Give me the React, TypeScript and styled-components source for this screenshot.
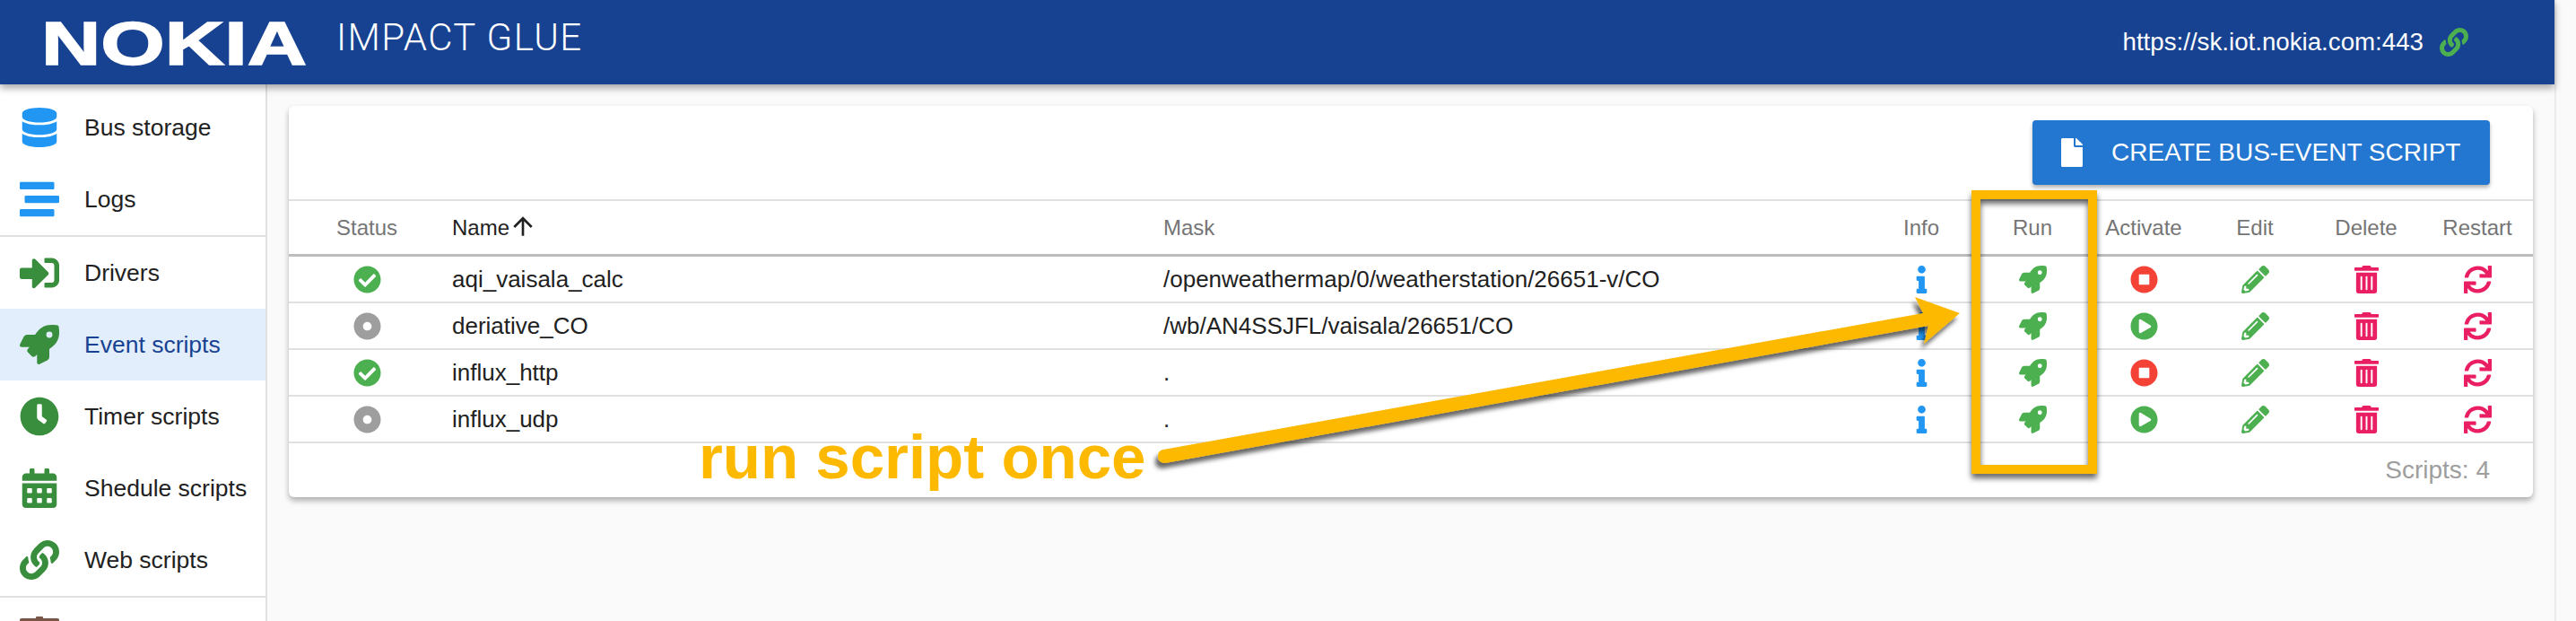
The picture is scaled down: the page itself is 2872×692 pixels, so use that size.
import React from 'react'
import styled, { createGlobalStyle } from 'styled-components'
import {
  FaDatabase, FaStream, FaSignInAlt, FaRocket, FaClock, FaCalendarAlt, FaLink,
  FaInfo, FaPlayCircle, FaStopCircle, FaPencilAlt, FaTrashAlt, FaSync, FaCheckCircle, FaDotCircle, FaFile,
} from 'react-icons/fa'
import { MdArrowUpward } from 'react-icons/md'

const GlobalStyle = createGlobalStyle`
  html, body {
    margin: 0;
    height: 692px;
    overflow: hidden;
    background: #fafafa;
    font-family: "Liberation Sans", Arial, sans-serif;
  }
`

const Page = styled.div`
  position: relative;
  display: flex;
  width: 2872px;
  height: 692px;
  overflow: hidden;
`

const Main = styled.div`
  width: 2848px;
  display: flex;
  flex-direction: column;
`

const ScrollTrack = styled.div`
  width: 22px;
  border-left: 2px solid #ebebeb;
  background: #fafafa;
`

const Header = styled.header`
  position: relative;
  z-index: 2;
  height: 94px;
  flex: none;
  display: flex;
  align-items: center;
  padding: 0 96px 0 46px;
  background: #174291;
  color: #fff;
  box-shadow: 0 4px 8px rgba(0, 0, 0, 0.35);
`

const Logo = styled.svg`
  width: 296px;
  height: 80px;
  flex: none;
`

const Title = styled.h1`
  margin: 0 0 11px 33px;
  font: 300 42px Roboto, "Liberation Sans", sans-serif;
  letter-spacing: 1.4px;
`

const Server = styled.div`
  margin-left: auto;
  display: flex;
  align-items: center;
  gap: 18px;
  font-size: 27.7px;
  svg {
    color: #4caf50;
    font-size: 32px;
  }
`

const Body = styled.div`
  flex: 1;
  display: flex;
  min-height: 0;
`

const Sidebar = styled.nav`
  width: 296px;
  flex: none;
  padding-top: 8px;
  background: #fff;
  border-right: 2px solid #e0e0e0;
`

const NavItem = styled.div<{ $active?: boolean; $color: string }>`
  height: 80px;
  display: flex;
  align-items: center;
  padding-left: 22px;
  font-size: 26.5px;
  color: ${p => (p.$active ? '#174291' : '#212121')};
  background: ${p => (p.$active ? '#e3eefd' : 'transparent')};
  svg {
    width: 44px;
    height: 44px;
    margin-right: 28px;
    color: ${p => p.$color};
  }
`

const NavRule = styled.div`
  height: 2px;
  background: #e0e0e0;
`

const Content = styled.main`
  flex: 1;
  padding: 24px;
`

const Card = styled.section`
  background: #fff;
  border-radius: 6px;
  box-shadow: 0 4px 6px rgba(0, 0, 0, 0.3);
  height: 436px;
`

const Toolbar = styled.div`
  height: 106px;
  box-sizing: border-box;
  display: flex;
  justify-content: flex-end;
  align-items: flex-start;
  padding: 16px 48px 0 0;
  border-bottom: 2px solid #e0e0e0;
`

const CreateButton = styled.button`
  width: 510px;
  height: 72px;
  display: flex;
  align-items: center;
  padding: 0 0 0 28px;
  border: 0;
  border-radius: 4px;
  background: #2377d1;
  color: #fff;
  font: 400 28px "Liberation Sans", Arial, sans-serif;
  box-shadow: 0 3px 4px rgba(0, 0, 0, 0.3);
  svg {
    font-size: 32px;
    margin-right: 28px;
  }
`

const Row = styled.div<{ $head?: boolean }>`
  display: grid;
  grid-template-columns: 174px 793px 791px repeat(6, 124px);
  align-items: center;
  height: ${p => (p.$head ? '62px' : '52px')};
  box-sizing: border-box;
  border-bottom: ${p => (p.$head ? '3px solid #bdbdbd' : '2px solid #e0e0e0')};
  color: ${p => (p.$head ? '#757575' : '#212121')};
  font-size: ${p => (p.$head ? '24px' : '26px')};
`

const Centered = styled.div<{ $color?: string }>`
  display: flex;
  justify-content: center;
  align-items: center;
  color: ${p => p.$color || 'inherit'};
  svg {
    width: 31px;
    height: 31px;
  }
`

const TextCell = styled.div<{ $dark?: boolean }>`
  display: flex;
  align-items: center;
  padding-left: 8px;
  color: ${p => (p.$dark ? '#212121' : 'inherit')};
  svg {
    width: 32px;
    height: 32px;
    margin: -4px 0 0 -1px;
  }
`

const Footer = styled.div`
  height: 60px;
  display: flex;
  align-items: center;
  justify-content: flex-end;
  padding-right: 48px;
  color: #9e9e9e;
  font-size: 28px;
`

const Annotations = styled.svg`
  position: absolute;
  inset: 0;
  width: 2872px;
  height: 692px;
  pointer-events: none;
`

const Callout = styled.div`
  position: absolute;
  left: 779px;
  top: 470px;
  color: #fdb900;
  font-size: 69px;
  font-weight: 700;
  line-height: 80px;
`

const RunFrame = styled.div`
  position: absolute;
  left: 2198px;
  top: 212px;
  width: 140px;
  height: 316px;
  box-sizing: border-box;
  border: 10px solid #fdb900;
  filter: drop-shadow(0 5px 3px rgba(0, 0, 0, 0.6));
`

// the next menu entry is cut off by the window, only the top of its icon shows
const ClippedIcon = () => (
  <svg viewBox="0 0 44 44" fill="currentColor">
    <rect x="18" y="3" width="8" height="4" rx="1" />
    <rect x="0" y="5" width="44" height="39" rx="2" />
  </svg>
)

const nav = [
  [
    { label: 'Bus storage', icon: FaDatabase, color: '#2196f3' },
    { label: 'Logs', icon: FaStream, color: '#2196f3' },
  ],
  [
    { label: 'Drivers', icon: FaSignInAlt, color: '#388e3c' },
    { label: 'Event scripts', icon: FaRocket, color: '#388e3c', active: true },
    { label: 'Timer scripts', icon: FaClock, color: '#388e3c' },
    { label: 'Shedule scripts', icon: FaCalendarAlt, color: '#388e3c' },
    { label: 'Web scripts', icon: FaLink, color: '#388e3c' },
  ],
  [{ label: '', icon: ClippedIcon, color: '#795548' }],
]

const scripts = [
  { name: 'aqi_vaisala_calc', mask: '/openweathermap/0/weatherstation/26651-v/CO', active: true },
  { name: 'deriative_CO', mask: '/wb/AN4SSJFL/vaisala/26651/CO', active: false },
  { name: 'influx_http', mask: '.', active: true },
  { name: 'influx_udp', mask: '.', active: false },
]

const App = () => (
  <Page>
    <GlobalStyle />
    <Main>
      <Header>
        <Logo viewBox="0 0 296 80">
          <text
            x="0"
            y="65"
            textLength="296"
            lengthAdjust="spacingAndGlyphs"
            fontFamily="Liberation Sans"
            fontWeight="700"
            fontSize="68"
            fill="#fff"
            stroke="#fff"
            strokeWidth="1.5"
          >
            NOKIA
          </text>
        </Logo>
        <Title>IMPACT GLUE</Title>
        <Server>
          https://sk.iot.nokia.com:443
          <FaLink />
        </Server>
      </Header>
      <Body>
        <Sidebar>
          {nav.map((group, i) => (
            <React.Fragment key={i}>
              {i > 0 && <NavRule />}
              {group.map(item => (
                <NavItem key={item.label} $active={'active' in item} $color={item.color}>
                  <item.icon />
                  {item.label}
                </NavItem>
              ))}
            </React.Fragment>
          ))}
        </Sidebar>
        <Content>
          <Card>
            <Toolbar>
              <CreateButton>
                <FaFile />
                CREATE BUS-EVENT SCRIPT
              </CreateButton>
            </Toolbar>
            <Row $head>
              <Centered>Status</Centered>
              <TextCell $dark>
                Name
                <MdArrowUpward />
              </TextCell>
              <TextCell>Mask</TextCell>
              <Centered>Info</Centered>
              <Centered>Run</Centered>
              <Centered>Activate</Centered>
              <Centered>Edit</Centered>
              <Centered>Delete</Centered>
              <Centered>Restart</Centered>
            </Row>
            {scripts.map(s => (
              <Row key={s.name}>
                <Centered $color={s.active ? '#4caf50' : '#9e9e9e'}>
                  {s.active ? <FaCheckCircle /> : <FaDotCircle />}
                </Centered>
                <TextCell>{s.name}</TextCell>
                <TextCell>{s.mask}</TextCell>
                <Centered $color="#2196f3"><FaInfo /></Centered>
                <Centered $color="#4caf50"><FaRocket /></Centered>
                <Centered $color={s.active ? '#f44336' : '#4caf50'}>
                  {s.active ? <FaStopCircle /> : <FaPlayCircle />}
                </Centered>
                <Centered $color="#4caf50"><FaPencilAlt /></Centered>
                <Centered $color="#e91e63"><FaTrashAlt /></Centered>
                <Centered $color="#e91e63"><FaSync /></Centered>
              </Row>
            ))}
            <Footer>Scripts: 4</Footer>
          </Card>
        </Content>
      </Body>
    </Main>
    <ScrollTrack />
    <RunFrame />
    <Annotations viewBox="0 0 2872 692">
      <defs>
        <filter id="arrowShadow" x="-5%" y="-20%" width="110%" height="150%">
          <feDropShadow dx="-3" dy="6" stdDeviation="2.5" floodColor="#000" floodOpacity="0.6" />
        </filter>
      </defs>
      <path
        filter="url(#arrowShadow)"
        fill="#fdb900"
        d="M1297 501 L2144 349 L2135 331 L2185 349 L2145 383 L2150 363 L1299 516 Q1291 516 1291 508 Q1291 502 1297 501 Z"
      />
    </Annotations>
    <Callout>run script once</Callout>
  </Page>
)

export default App
